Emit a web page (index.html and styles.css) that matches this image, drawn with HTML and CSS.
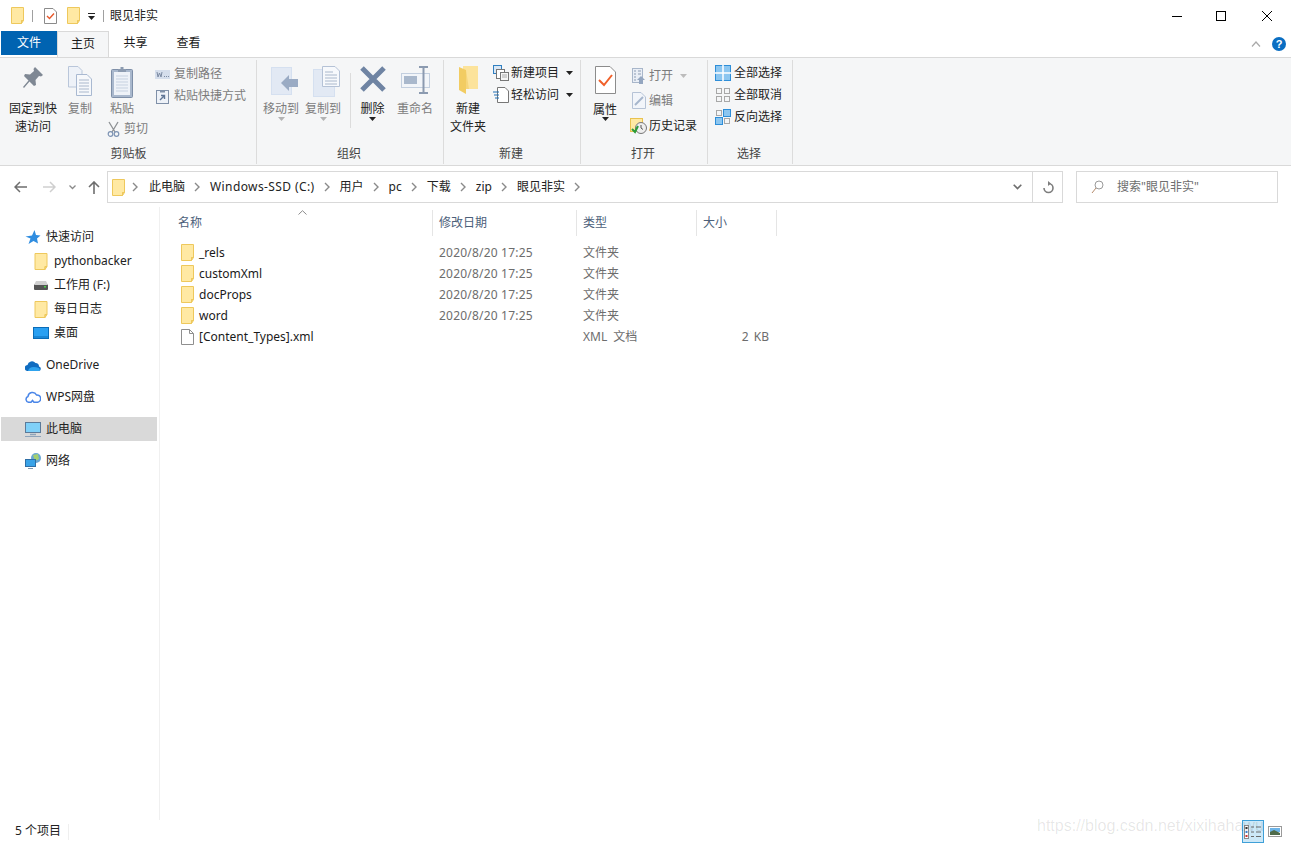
FILE: index.html
```html
<!DOCTYPE html>
<html lang="zh-CN">
<head>
<meta charset="utf-8">
<title>眼见非实</title>
<link rel="stylesheet" href="styles.css">
</head>
<body>
<svg class="defs" width="0" height="0" aria-hidden="true">
  <defs>
    <symbol id="folder" viewBox="0 0 13 17">
      <path d="M.5.5H12.5V13.5H10.5V16.5H.5Z" fill="#ffe9a3" stroke="#eec85c"/>
      <path d="M10.5 16.5V13.5H12.5Z" fill="#f4d67a" stroke="#eec85c"/>
    </symbol>
    <symbol id="caret-down" viewBox="0 0 7 4"><path d="M0 0H7L3.5 4Z"/></symbol>
    <symbol id="chev" viewBox="0 0 6 10"><path d="M1 1L5 5L1 9" fill="none" stroke="#8a8a8a" stroke-width="1.4"/></symbol>
  </defs>
</svg>
<div class="window">
  <header class="titlebar">
    <svg class="ic-folder" width="13" height="17"><use href="#folder"/></svg>
    <span class="qa-sep"></span>
    <svg class="qa-doc" width="13" height="16" viewBox="0 0 13 16"><path d="M.5.5H9L12.5 4V15.5H.5Z" fill="#fff" stroke="#8b8b8b"/><path d="M3 8L5.5 10.5L10 5.5" fill="none" stroke="#e8572a" stroke-width="1.4"/></svg>
    <svg class="ic-folder qa-folder" width="13" height="17"><use href="#folder"/></svg>
    <span class="qa-drop"><i class="qa-bar"></i><svg width="7" height="4" class="dark"><use href="#caret-down"/></svg></span>
    <span class="qa-sep qa-sep2"></span>
    <span class="title">眼见非实</span>
    <div class="win-buttons">
      <svg width="12" height="12" viewBox="0 0 12 12"><path d="M1 6.5H11" stroke="#000"/></svg>
      <svg class="win-max" width="12" height="12" viewBox="0 0 12 12"><rect x="1.5" y="1.5" width="9" height="9" fill="none" stroke="#000"/></svg>
      <svg width="12" height="12" viewBox="0 0 12 12"><path d="M1 1L11 11M11 1L1 11" stroke="#000" fill="none"/></svg>
    </div>
  </header>

  <nav class="tabs">
    <span class="tab tab-file">文件</span>
    <span class="tab tab-active">主页</span>
    <span class="tab tab-plain">共享</span>
    <span class="tab tab-plain">查看</span>
    <span class="tabs-right">
      <svg width="10" height="6" viewBox="0 0 10 6"><path d="M1 5.5L5 1L9 5.5" fill="none" stroke="#a9a9a9" stroke-width="1.2"/></svg>
      <span class="help">?</span>
    </span>
  </nav>

  <section class="ribbon">
    <div class="group g-clip">
      <div class="group-body">
        <div class="big w60">
          <div class="big-icon">
            <svg width="22" height="24" viewBox="0 0 22 24"><path d="M13 1L21 9L19 10.5L17 10L13.5 14L14 19L12 20L7.5 15.5L2 22L1 21L6.5 14.5L2 10L3 8L8 8.5L12 5L11.5 3Z" fill="#7f8894"/></svg>
          </div>
          <span class="lbl">固定到快<br>速访问</span>
        </div>
        <div class="big w34 off">
          <div class="big-icon">
            <svg width="24" height="30" viewBox="0 0 24 30"><path d="M.5.5H10L14 4.5V21H.5Z" fill="#eef2f8" stroke="#b9c6da"/><path d="M8.5 8.5H19L23.5 13V29.5H8.5Z" fill="#f6f8fb" stroke="#a9b9d1"/><path d="M11 14H21M11 17H21M11 20H21M11 23H21M11 26H21" stroke="#aab8cc"/></svg>
          </div>
          <span class="lbl">复制</span>
        </div>
        <div class="stack off">
          <div class="big w50">
            <div class="big-icon">
              <svg width="22" height="32" viewBox="0 0 22 32"><rect x=".5" y="3.5" width="21" height="28" rx="1" fill="#a9b8cd" stroke="#7e8fa8"/><rect x="3" y="6" width="16" height="23" fill="#eef2f8"/><path d="M5 10H17M5 13H17M5 16H17M5 19H17M5 22H17M5 25H17" stroke="#c6d1e0"/><path d="M7 6V3H9.5V1H12.5V3H15V6Z" fill="#8c9bb0"/></svg>
            </div>
            <span class="lbl">粘贴</span>
          </div>
          <div class="row cut-row">
            <svg width="13" height="16" viewBox="0 0 13 16"><path d="M2 1L8 11M11 1L5 11" stroke="#8d9094" stroke-width="1.3" fill="none"/><circle cx="3.5" cy="13" r="2.3" fill="none" stroke="#7e94b4" stroke-width="1.2"/><circle cx="9.5" cy="13" r="2.3" fill="none" stroke="#7e94b4" stroke-width="1.2"/></svg>
            <span>剪切</span>
          </div>
        </div>
        <div class="rows off rows-clip">
          <div class="row">
            <svg width="15" height="9" viewBox="0 0 15 9"><rect width="15" height="9" fill="#d5deec"/><path d="M2 2L3 7L4.5 3L6 7L7 2M9 6.5H10M11 6.5H12M13 6.5H14" stroke="#7c8ba3" fill="none"/></svg>
            <span>复制路径</span>
          </div>
          <div class="row">
            <svg width="13" height="15" viewBox="0 0 13 15" class="ml1"><rect x=".5" y="1.5" width="12" height="13" fill="#eef2f8" stroke="#7f90a8"/><path d="M4 1.5H9V3.5H4Z" fill="#7f90a8"/><path d="M4 11L8 7M5 6.5H8.5V10" stroke="#5f7696" stroke-width="1.4" fill="none"/></svg>
            <span>粘贴快捷方式</span>
          </div>
        </div>
      </div>
      <span class="group-label">剪贴板</span>
    </div>

    <div class="group g-org">
      <div class="group-body">
        <div class="big w42 off">
          <div class="big-icon nudge">
            <svg width="27" height="30" viewBox="0 0 27 30"><rect x="0" y="1" width="21" height="28" fill="#d5e0f0"/><rect x="1" y="2" width="19" height="26" fill="#e2e9f4"/><path d="M27 13H18V9L10 17L18 25V21H27Z" fill="#9aabc4"/></svg>
          </div>
          <span class="lbl">移动到</span>
          <svg class="mini-caret" width="7" height="4"><use href="#caret-down"/></svg>
        </div>
        <div class="big w42 off">
          <div class="big-icon nudge">
            <svg width="27" height="31" viewBox="0 0 27 31"><rect x="0" y="3" width="22" height="28" fill="#d5e0f0"/><rect x="1" y="4" width="20" height="26" fill="#e2e9f4"/><path d="M9.5.5H22L26.5 5V20.5H9.5Z" fill="#f7f9fc" stroke="#b5c2d6"/><path d="M12 6H20M12 9H24M12 12H24M12 15H24M12 18H24" stroke="#aab8cc"/></svg>
          </div>
          <span class="lbl">复制到</span>
          <svg class="mini-caret" width="7" height="4"><use href="#caret-down"/></svg>
        </div>
        <span class="vline"></span>
        <div class="big w43">
          <div class="big-icon">
            <svg width="26" height="26" viewBox="0 0 26 26"><path d="M2 2L24 24M24 2L2 24" stroke="#6f84a3" stroke-width="5"/></svg>
          </div>
          <span class="lbl">删除</span>
          <svg class="dark-caret" width="7" height="4"><use href="#caret-down"/></svg>
        </div>
        <div class="big w42 off">
          <div class="big-icon">
            <svg width="29" height="28" viewBox="0 0 29 28"><rect x=".5" y="7.5" width="28" height="14" fill="#f2f5f9" stroke="#c3cfdf"/><rect x="3" y="10" width="13" height="8" fill="#a9b8cc"/><path d="M18 1H27M18 27H27M22.5 1V27" stroke="#8b9ab0" stroke-width="2"/></svg>
          </div>
          <span class="lbl">重命名</span>
        </div>
      </div>
      <span class="group-label">组织</span>
    </div>

    <div class="group g-new">
      <div class="group-body">
        <div class="big w44">
          <div class="big-icon">
            <svg width="20" height="28" viewBox="0 0 20 28"><path d="M5 0H20V23H5Z" fill="#fce39b"/><path d="M1 1L8 4V28L1 24Z" fill="#f2cc62"/><path d="M8 4L11 23H8Z" fill="#f6d67c"/></svg>
          </div>
          <span class="lbl">新建<br>文件夹</span>
        </div>
        <div class="rows rows-new">
          <div class="row">
            <svg width="16" height="16" viewBox="0 0 16 16"><rect x=".5" y=".5" width="8" height="8" fill="#d9e7f5" stroke="#2f7fc1"/><rect x="3.5" y="4.5" width="8" height="9" fill="#fff" stroke="#777"/><rect x="7.5" y="7.5" width="8" height="8" fill="#f6f6f6" stroke="#777"/><path d="M9 10H14M9 12H14" stroke="#aaa"/></svg>
            <span>新建项目</span>
            <svg class="row-caret" width="7" height="4"><use href="#caret-down"/></svg>
          </div>
          <div class="row">
            <svg width="16" height="16" viewBox="0 0 16 16"><path d="M4.5.5H12L15.5 4V15.5H4.5Z" fill="#fff" stroke="#777"/><path d="M0 5H6M1 8H6M2 11H6" stroke="#1f6fb5"/></svg>
            <span>轻松访问</span>
            <svg class="row-caret" width="7" height="4"><use href="#caret-down"/></svg>
          </div>
        </div>
      </div>
      <span class="group-label">新建</span>
    </div>

    <div class="group g-open">
      <div class="group-body">
        <div class="big w40 tall">
          <div class="big-icon">
            <svg width="21" height="28" viewBox="0 0 21 28"><path d="M.5.5H15L20.5 6V27.5H.5Z" fill="#fff" stroke="#8c8c8c"/><path d="M4 14L9 19L17 9" fill="none" stroke="#f0602a" stroke-width="2"/></svg>
          </div>
          <span class="lbl">属性</span>
          <svg class="dark-caret" width="7" height="4"><use href="#caret-down"/></svg>
        </div>
        <div class="rows rows-open">
          <div class="row off">
            <svg class="ml2" width="14" height="16" viewBox="0 0 14 16"><rect x=".5" y=".5" width="10" height="14" fill="#e9eef6" stroke="#a8b6ca"/><path d="M2 3H4M6 3H9M2 6H4M6 6H9M2 9H4M2 12H4" stroke="#8b9bb2"/><path d="M9 8L13 12H11V16H7V12H5Z" fill="#94a6c0"/></svg>
            <span>打开</span>
            <svg class="mini-inline" width="7" height="4"><use href="#caret-down"/></svg>
          </div>
          <div class="row off">
            <svg class="ml2" width="14" height="17" viewBox="0 0 14 17"><path d="M.5.5H9L13.5 5V16.5H.5Z" fill="#f2f5fa" stroke="#b6c3d6"/><path d="M3 13L11 5" stroke="#a6b6cc" stroke-width="2"/></svg>
            <span>编辑</span>
          </div>
          <div class="row hist">
            <svg width="17" height="16" viewBox="0 0 17 16"><rect x=".5" y=".5" width="12" height="13" fill="#ffe9a3" stroke="#e9c24f"/><circle cx="11" cy="10" r="5.5" fill="#eee" stroke="#777"/><path d="M11 7V10L13 11.5" stroke="#555" fill="none"/><path d="M2 11L5 14L8 8" stroke="#2c9b38" stroke-width="2" fill="none"/></svg>
            <span>历史记录</span>
          </div>
        </div>
      </div>
      <span class="group-label">打开</span>
    </div>

    <div class="group g-sel">
      <div class="group-body">
        <div class="rows rows-sel">
          <div class="row">
            <svg width="16" height="16" viewBox="0 0 16 16"><rect x=".5" y=".5" width="15" height="15" fill="#8cc6f0" stroke="#2e8ed8"/><path d="M8 0V16M0 8H16" stroke="#fff" stroke-width="1.5"/></svg>
            <span>全部选择</span>
          </div>
          <div class="row">
            <svg width="16" height="16" viewBox="0 0 16 16" fill="none" stroke="#a8a8a8"><rect x="1.5" y="1.5" width="5" height="5"/><rect x="9.5" y="1.5" width="5" height="5"/><rect x="1.5" y="9.5" width="5" height="5"/><rect x="9.5" y="9.5" width="5" height="5"/></svg>
            <span>全部取消</span>
          </div>
          <div class="row">
            <svg width="16" height="16" viewBox="0 0 16 16"><rect x="1.5" y="1.5" width="5" height="5" fill="none" stroke="#a8a8a8"/><rect x="8.5" y=".5" width="7" height="7" fill="#8cc6f0" stroke="#2e8ed8"/><rect x=".5" y="8.5" width="7" height="7" fill="#8cc6f0" stroke="#2e8ed8"/><rect x="9.5" y="9.5" width="5" height="5" fill="none" stroke="#a8a8a8"/></svg>
            <span>反向选择</span>
          </div>
        </div>
      </div>
      <span class="group-label">选择</span>
    </div>
  </section>

  <div class="navbar">
    <div class="nav-btns">
      <svg class="nb-back" width="13" height="12" viewBox="0 0 13 12"><path d="M6 1L1 6L6 11M1 6H13" fill="none" stroke="#6e6e6e" stroke-width="1.5"/></svg>
      <svg class="nb-fwd" width="13" height="12" viewBox="0 0 13 12"><path d="M7 1L12 6L7 11M12 6H0" fill="none" stroke="#cfcfcf" stroke-width="1.5"/></svg>
      <svg class="nb-hist" width="7" height="5" viewBox="0 0 7 5"><path d="M.5.5L3.5 3.5L6.5.5" fill="none" stroke="#8a8a8a" stroke-width="1.3"/></svg>
      <svg class="nb-up" width="12" height="13" viewBox="0 0 12 13"><path d="M1 6L6 1L11 6M6 1V13" fill="none" stroke="#6e6e6e" stroke-width="1.6"/></svg>
    </div>
    <div class="address">
      <svg class="addr-folder" width="13" height="17"><use href="#folder"/></svg>
      <svg class="crumb-chev first-chev" width="6" height="10"><use href="#chev"/></svg>
      <span class="crumb">此电脑</span>
      <svg class="crumb-chev" width="6" height="10"><use href="#chev"/></svg>
      <span class="crumb crumb-wide">Windows-SSD (C:)</span>
      <svg class="crumb-chev" width="6" height="10"><use href="#chev"/></svg>
      <span class="crumb">用户</span>
      <svg class="crumb-chev" width="6" height="10"><use href="#chev"/></svg>
      <span class="crumb">pc</span>
      <svg class="crumb-chev" width="6" height="10"><use href="#chev"/></svg>
      <span class="crumb">下载</span>
      <svg class="crumb-chev" width="6" height="10"><use href="#chev"/></svg>
      <span class="crumb">zip</span>
      <svg class="crumb-chev" width="6" height="10"><use href="#chev"/></svg>
      <span class="crumb">眼见非实</span>
      <svg class="crumb-chev" width="6" height="10"><use href="#chev"/></svg>
      <span class="addr-drop">
        <svg width="9" height="6" viewBox="0 0 9 6"><path d="M.7.7L4.5 4.5L8.3.7" fill="none" stroke="#6e6e6e" stroke-width="1.6"/></svg>
      </span>
      <span class="addr-refresh">
        <svg width="12" height="13" viewBox="0 0 12 13"><path d="M6.5 2.5A4.5 4.5 0 1 1 2 7" fill="none" stroke="#7d7d7d" stroke-width="1.6"/><path d="M6 0L9 2.5L6 5Z" fill="#7d7d7d"/></svg>
      </span>
    </div>
    <div class="search">
      <svg width="13" height="14" viewBox="0 0 13 14"><circle cx="8" cy="5" r="4" fill="none" stroke="#9a9a9a"/><path d="M5 8L1 13" stroke="#b58a6a"/></svg>
      <span>搜索"眼见非实"</span>
    </div>
  </div>

  <main class="content">
    <aside class="sidebar">
      <div class="side-group">
        <div class="side-item">
          <svg width="15" height="14" viewBox="0 0 15 14"><path d="M9 0L10.5 5L15 5.5L11.5 8.5L12.5 13.5L8 11L3 14L5 8.5L0 6.5L6.5 5.5Z" fill="#2f8de0"/></svg>
          <span>快速访问</span>
        </div>
        <div class="side-item sub">
          <svg width="13" height="17"><use href="#folder"/></svg>
          <span>pythonbacker</span>
        </div>
        <div class="side-item sub">
          <svg width="14" height="9" viewBox="0 0 14 9"><rect y="3" width="14" height="6" rx="1" fill="#555"/><path d="M2 0H12L14 4H0Z" fill="#d0d0d0"/><rect x="10" y="5" width="2" height="1.5" fill="#46d246"/></svg>
          <span>工作用 (F:)</span>
        </div>
        <div class="side-item sub">
          <svg width="13" height="17"><use href="#folder"/></svg>
          <span>每日日志</span>
        </div>
        <div class="side-item sub">
          <svg width="16" height="12" viewBox="0 0 16 12"><rect x=".5" y=".5" width="15" height="11" fill="#2aa0f2" stroke="#0a6cb8"/><path d="M1 10H15" stroke="#0a6cb8"/></svg>
          <span>桌面</span>
        </div>
      </div>
      <div class="side-group">
        <div class="side-item">
          <svg width="16" height="11" viewBox="0 0 16 11"><path d="M3 11A3 3 0 0 1 2.5 5A4.5 4.5 0 0 1 10.5 3A3.5 3.5 0 0 1 14 6.5A2.3 2.3 0 0 1 14 11Z" fill="#0f6cc0"/><path d="M3 11C4 7 8 6 14 8A2 2 0 0 1 14 11Z" fill="#2ea3ee"/></svg>
          <span>OneDrive</span>
        </div>
      </div>
      <div class="side-group">
        <div class="side-item">
          <svg width="16" height="12" viewBox="0 0 16 12"><path d="M4 11.3A3 3 0 0 1 3 5.5A4.5 4.5 0 0 1 11.5 4A3.5 3.5 0 0 1 12.5 11.3H9L7.5 9.5L6 11.3Z" fill="none" stroke="#4a86e8" stroke-width="1.5"/></svg>
          <span>WPS网盘</span>
        </div>
      </div>
      <div class="side-group">
        <div class="side-item selected">
          <svg width="16" height="15" viewBox="0 0 16 15"><rect x=".5" y=".5" width="15" height="10" fill="#7fd0f8" stroke="#5b7a99"/><path d="M5 12.5H11" stroke="#8ea4ba" stroke-width="1.5"/><path d="M0 14.5H16" stroke="#8ea4ba"/></svg>
          <span>此电脑</span>
        </div>
      </div>
      <div class="side-group">
        <div class="side-item">
          <svg width="16" height="16" viewBox="0 0 16 16"><circle cx="11" cy="5" r="5" fill="#6aa7d4"/><path d="M8 2L13 1L14 6L10 8Z" fill="#a4d06f"/><rect x=".5" y="6.5" width="10" height="7" fill="#39a3e8" stroke="#2f6ea5"/><path d="M3 15.5H8" stroke="#7f96ad"/></svg>
          <span>网络</span>
        </div>
      </div>
    </aside>

    <section class="files">
      <div class="col-head">
        <span class="sort-arrow"><svg width="9" height="5" viewBox="0 0 9 5"><path d="M.5 4.5L4.5.7L8.5 4.5" fill="none" stroke="#8b8b8b"/></svg></span>
        <span class="hc c-name">名称</span>
        <span class="hc c-date">修改日期</span>
        <span class="hc c-type">类型</span>
        <span class="hc c-size">大小</span>
      </div>
      <div class="file-rows">
        <div class="file">
          <span class="c-name name-cell"><svg width="13" height="17"><use href="#folder"/></svg>_rels</span>
          <span class="c-date muted date-val">2020/8/20 17:25</span>
          <span class="c-type muted">文件夹</span>
          <span class="c-size muted"></span>
        </div>
        <div class="file">
          <span class="c-name name-cell"><svg width="13" height="17"><use href="#folder"/></svg>customXml</span>
          <span class="c-date muted date-val">2020/8/20 17:25</span>
          <span class="c-type muted">文件夹</span>
          <span class="c-size muted"></span>
        </div>
        <div class="file">
          <span class="c-name name-cell"><svg width="13" height="17"><use href="#folder"/></svg>docProps</span>
          <span class="c-date muted date-val">2020/8/20 17:25</span>
          <span class="c-type muted">文件夹</span>
          <span class="c-size muted"></span>
        </div>
        <div class="file">
          <span class="c-name name-cell"><svg width="13" height="17"><use href="#folder"/></svg>word</span>
          <span class="c-date muted date-val">2020/8/20 17:25</span>
          <span class="c-type muted">文件夹</span>
          <span class="c-size muted"></span>
        </div>
        <div class="file">
          <span class="c-name name-cell"><svg width="13" height="16" viewBox="0 0 13 16"><path d="M.5.5H8.5L12.5 4.5V15.5H.5Z" fill="#fff" stroke="#8f8f8f"/><path d="M8.5.5V4.5H12.5" fill="none" stroke="#8f8f8f"/></svg>[Content_Types].xml</span>
          <span class="c-date muted"></span>
          <span class="c-type muted type-xml">XML 文档</span>
          <span class="c-size muted size-val">2 KB</span>
        </div>
      </div>
    </section>
  </main>

  <footer class="status">
    <span class="status-text">5 个项目</span>
    <span class="status-sep"></span>
    <span class="view-btns">
      <span class="view-active">
        <svg width="18" height="17" viewBox="0 0 18 17"><rect x=".5" y="2.5" width="4" height="13" fill="#fff" stroke="#8a8a8a"/><rect x="1.5" y="4" width="2" height="2" fill="#333"/><rect x="1.5" y="8" width="2" height="2" fill="#3a7fd0"/><rect x="1.5" y="12" width="2" height="2" fill="#d03030"/><path d="M7 4H10M12 4H17M7 9H10M12 9H17M7 13.5H10M12 13.5H17" stroke="#6b6b6b"/></svg>
      </span>
      <svg class="view-thumb" width="14" height="11" viewBox="0 0 14 11"><rect x=".5" y=".5" width="13" height="10" fill="#fff" stroke="#9a9a9a"/><rect x="2" y="2" width="10" height="4" fill="#6db4e8"/><path d="M2 6L6 4L12 7V9H2Z" fill="#4f6b4a"/></svg>
    </span>
  </footer>
</div>
<div class="watermark">https://blog.csdn.net/xixihahawu</div>
</body>
</html>
```
FILE: styles.css
```css
* { box-sizing: border-box; }
html, body { margin: 0; height: 100%; overflow: hidden; background: #fff; }
body { font: 12px/18px "Noto Sans", "Noto Sans CJK SC", sans-serif; color: #1a1a1a; position: relative; }
svg { display: block; flex: none; }
.defs { position: absolute; }
.window { height: 843px; display: flex; flex-direction: column; }

/* title bar */
.titlebar { height: 31px; display: flex; align-items: center; padding: 0 0 0 11px; flex: none; }
.qa-sep { width: 1px; height: 12px; background: #a0a0a0; margin-left: 8px; }
.qa-doc { margin-left: 11px; }
.qa-folder { margin-left: 10px; }
.qa-drop { margin-left: 8px; width: 7px; display: flex; flex-direction: column; gap: 2px; padding-top: 2px; }
.qa-bar { display: block; height: 1px; width: 7px; background: #222; }
.dark { fill: #222; }
.qa-sep2 { margin-left: 8px; }
.title { margin-left: 6px; font-size: 12px; color: #222; }
.win-buttons { margin-left: auto; display: flex; gap: 33px; padding-right: 18px; }
.win-max { margin: 0 1px 0 -1px; }

/* tabs */
.tabs { height: 26px; display: flex; flex: none; padding-left: 1px; position: relative; z-index: 1; }
.tab { display: flex; align-items: center; justify-content: center; width: 56px; height: 24px; }
.tab-file { background: #0063b1; color: #fff; }
.tab-active { width: 52px; height: 26px; background: #f5f6f7; border: 1px solid #d9d9d9; border-bottom: 0; padding-bottom: 2px; }
.tab-plain { width: 53px; }
.tabs-right { margin-left: auto; display: flex; align-items: center; gap: 11px; height: 26px; padding-right: 5px; }
.help { width: 14px; height: 14px; border-radius: 50%; background: #0a6ec2; color: #fff; font: bold 11px/14px "Liberation Sans", sans-serif; text-align: center; }

/* ribbon */
.ribbon { height: 109px; flex: none; display: flex; background: #f5f6f7; border-top: 1px solid #d9d9d9; border-bottom: 1px solid #d9d9d9; padding: 2px 0 1px 1px; color: #222; }
.group { display: flex; flex-direction: column; border-right: 1px solid #dcdcdc; flex: none; }
.group-body { flex: 1; display: flex; min-height: 0; padding-top: 6px; }
.group-label { height: 18px; text-align: center; color: #444; margin-bottom: 1px; padding-right: 2px; }
.g-clip { width: 256px; }
.g-clip .group-label { padding-right: 0; }
.g-clip .group-body { padding-left: 2px; }
.g-org { width: 187px; }
.g-org .group-body { padding-left: 3px; }
.g-new { width: 137px; }
.g-new .group-body { padding-left: 2px; }
.g-open { width: 127px; }
.g-open .group-body { padding-left: 4px; }
.g-sel { width: 85px; }
.g-sel .group-body { padding-left: 7px; }

.big { display: flex; flex-direction: column; align-items: center; flex: none; text-align: center; }
.big-icon { height: 34px; display: flex; align-items: flex-start; justify-content: center; }
.nudge { padding-left: 6px; }
.tall .big-icon { height: 35px; }
.tall .dark-caret { margin-top: -2px; }
.lbl { white-space: nowrap; }
.w60 { width: 60px; }
.w50 { width: 50px; }
.w44 { width: 44px; }
.w43 { width: 43px; }
.w42 { width: 42px; }
.w40 { width: 40px; }
.w34 { width: 34px; }
.off { color: #7c7c7c; }
.stack { width: 58px; flex: none; }
.row { height: 22px; display: flex; align-items: center; gap: 3px; white-space: nowrap; }
.cut-row { padding-left: 10px; gap: 4px; }
.ml1 { margin-left: 1px; }
.ml2 { margin-left: 2px; }
.rows { display: flex; flex-direction: column; }
.rows-clip { margin-top: -3px; }
.rows-clip .row { gap: 4px; }
.rows-clip .row + .row { gap: 5px; }
.rows-new { margin: -4px 0 0 3px; }
.rows-new .row { gap: 2px; }
.rows-open { margin: -3px 0 0 5px; }
.rows-open .row { height: 25px; }
.rows-open .hist { gap: 2px; }
.rows-sel { margin-top: -4px; }
.rows-sel .row { gap: 3px; }
.row-caret { margin-left: 5px; fill: #222; }
.mini-inline { margin-left: 4px; fill: #bcbcbc; }
.mini-caret { fill: #b3b3b3; margin-top: -1px; }
.dark-caret { fill: #222; margin-top: -1px; }
.vline { width: 1px; height: 55px; background: #dcdcdc; margin: 7px 0 0 6px; flex: none; }

/* nav */
.navbar { height: 41px; flex: none; display: flex; align-items: flex-start; padding-top: 5px; }
.nav-btns { width: 107px; height: 32px; display: flex; align-items: center; flex: none; }
.nb-back { margin-left: 14px; }
.nb-fwd { margin-left: 16px; }
.nb-hist { margin-left: 13px; }
.nb-up { margin-left: 12px; }
.address { width: 956px; height: 32px; flex: none; border: 1px solid #d9d9d9; display: flex; align-items: center; padding-left: 4px; color: #222; }
.crumb-chev { margin: 0 10px 0 9px; }
.crumb-chev.first-chev { margin: 0 11px 0 7px; }
.crumb-wide { letter-spacing: .4px; }
.addr-drop { margin-left: auto; width: 30px; height: 30px; display: flex; align-items: center; justify-content: center; }
.addr-refresh { width: 30px; height: 30px; display: flex; align-items: center; justify-content: center; border-left: 1px solid #d9d9d9; }
.search { width: 202px; height: 32px; margin-left: 13px; border: 1px solid #d9d9d9; display: flex; align-items: center; gap: 13px; padding-left: 14px; color: #6e6e6e; }

/* content */
.content { flex: 1; min-height: 0; display: flex; }
.sidebar { width: 160px; flex: none; border-right: 1px solid #f0f0f0; padding: 18px 2px 0 1px; display: flex; flex-direction: column; gap: 8px; }
.side-item { height: 24px; display: flex; align-items: center; padding-left: 24px; color: #222; }
.side-item svg { width: 16px; margin-right: 5px; }
.side-item.sub { padding-left: 32px; }
.side-item.selected { background: #d9d9d9; }

.files { flex: 1; min-width: 0; position: relative; }
.col-head { height: 27px; margin-top: 2px; display: flex; color: #4c607a; position: relative; align-items: center; }
.sort-arrow { position: absolute; left: 138px; top: 1px; }
.hc { border-right: 1px solid #e5e5e5; height: 26px; display: flex; align-items: center; }
.c-name { width: 273px; padding-left: 18px; flex: none; }
.c-date { width: 144px; padding-left: 6px; flex: none; }
.c-type { width: 120px; padding-left: 6px; flex: none; }
.c-size { width: 80px; padding-left: 6px; flex: none; }
.file-rows { margin-top: 6px; }
.file { height: 21px; display: flex; align-items: center; color: #1a1a1a; }
.name-cell { padding-left: 21px; display: flex; align-items: center; gap: 5px; }
.muted { color: #6d6d6d; }
.date-val { letter-spacing: .2px; }
.type-xml { word-spacing: 3px; }
.size-val { text-align: right; padding-right: 8px; word-spacing: 2px; }

/* status */
.status { height: 23px; flex: none; display: flex; align-items: center; padding-left: 15px; color: #222; }
.status-text { margin-bottom: 2px; }
.status-sep { width: 1px; height: 16px; background: #efefef; margin-left: 7px; }
.view-btns { margin-left: auto; display: flex; align-items: center; gap: 4px; padding-right: 9px; }
.view-active { width: 22px; height: 23px; margin-bottom: 1px; background: #cce8f8; border: 1px solid #3fa0d8; display: flex; align-items: center; justify-content: center; }
.watermark { position: absolute; left: 1037px; top: 816px; font: 16px/20px "Liberation Sans", sans-serif; color: rgba(0,0,0,.1); white-space: nowrap; }
```
